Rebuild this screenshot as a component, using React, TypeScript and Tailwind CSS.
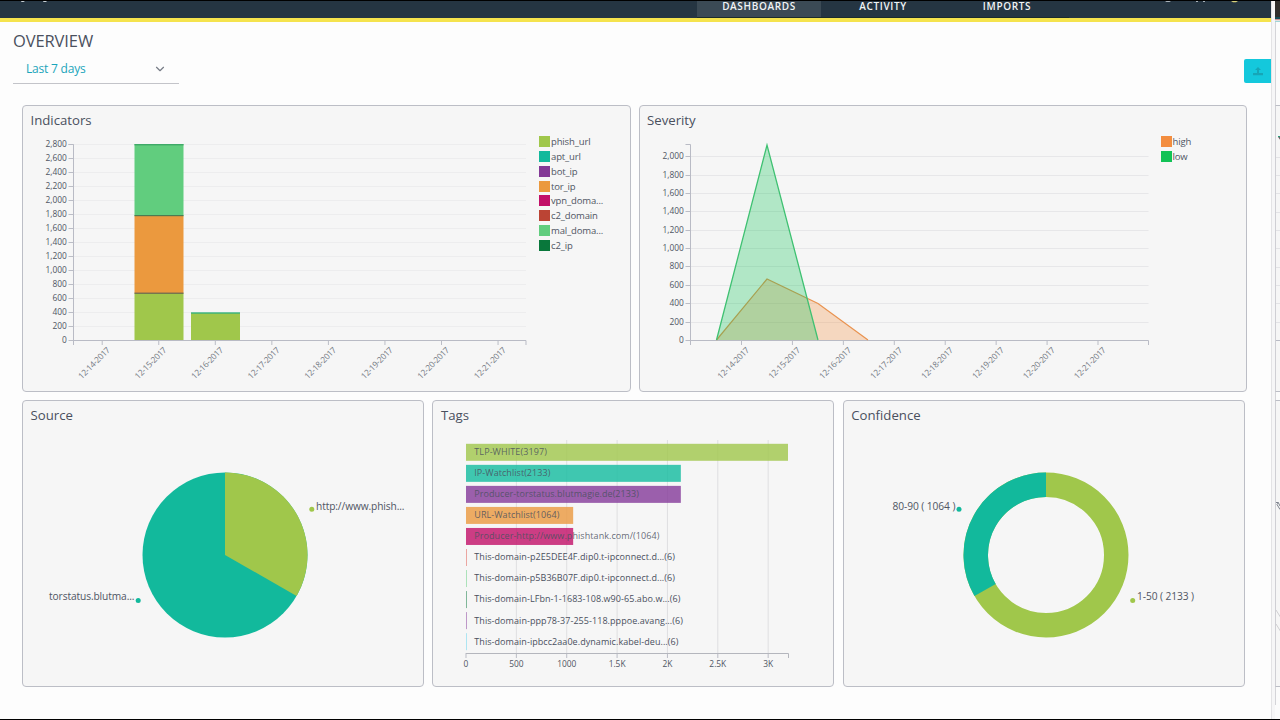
import React from "react";
import { ChevronDown } from "lucide-react";

const days = [
  "12-14-2017",
  "12-15-2017",
  "12-16-2017",
  "12-17-2017",
  "12-18-2017",
  "12-19-2017",
  "12-20-2017",
  "12-21-2017",
];

const indicatorLegend = [
  { label: "phish_url", color: "#a0c74b" },
  { label: "apt_url", color: "#12b99c" },
  { label: "bot_ip", color: "#833996" },
  { label: "tor_ip", color: "#eb993e" },
  { label: "vpn_doma...", color: "#c20f68" },
  { label: "c2_domain", color: "#bb4434" },
  { label: "mal_doma...", color: "#61cd7e" },
  { label: "c2_ip", color: "#09773b" },
];

const severityLegend = [
  { label: "high", color: "#f38d3f" },
  { label: "low", color: "#12c256" },
];

const tags = [
  { label: "TLP-WHITE(3197)", value: 3197, color: "#a0c74b", length: 72.5 },
  { label: "IP-Watchlist(2133)", value: 2133, color: "#12bc9f", length: 76 },
  { label: "Producer-torstatus.blutmagie.de(2133)", value: 2133, color: "#853a9a", length: 164.5 },
  { label: "URL-Watchlist(1064)", value: 1064, color: "#eb993e", length: 85 },
  { label: "Producer-http://www.phishtank.com/(1064)", value: 1064, color: "#c20f68", length: 185 },
  { label: "This-domain-p2E5DEE4F.dip0.t-ipconnect.d...(6)", value: 6, color: "#e0554c", length: 200.5 },
  { label: "This-domain-p5B36B07F.dip0.t-ipconnect.d...(6)", value: 6, color: "#61cd7e", length: 200.5 },
  { label: "This-domain-LFbn-1-1683-108.w90-65.abo.w...(6)", value: 6, color: "#09773b", length: 206 },
  { label: "This-domain-ppp78-37-255-118.pppoe.avang...(6)", value: 6, color: "#853a9a", length: 208.5 },
  { label: "This-domain-ipbcc2aa0e.dynamic.kabel-deu...(6)", value: 6, color: "#63d3ee", length: 204 },
];

const tagTicks = ["0", "500", "1000", "1.5K", "2K", "2.5K", "3K"];

const format = (n: number) => n.toLocaleString("en-US");

const Panel = ({ title, className, children }: { title: string; className: string; children: React.ReactNode }) => {
  return (
    <section className={`flex h-[287px] flex-col overflow-hidden rounded-[4px] border border-[#bcbec6] bg-[#f6f6f6] ${className}`}>
      <h2 className="h-[30px] pl-[7.5px] text-[13.2px] leading-[29px] text-[#4a505e]">{title}</h2>
      <div className="flex flex-1">{children}</div>
    </section>
  );
};

const Legend = ({ items }: { items: { label: string; color: string }[] }) => {
  return (
    <ul className="flex flex-col gap-[3.85px]">
      {items.map((item) => (
        <li key={item.label} className="flex h-[11px] items-center gap-px">
          <span className="h-[11px] w-[11px]" style={{ backgroundColor: item.color }} />
          <span className="text-[9.5px] leading-[11px] tracking-[-0.14px] text-[#4f5563]">{item.label}</span>
        </li>
      ))}
    </ul>
  );
};

type AxesProps = { x0: number; x1: number; first: number; step: number; unit: number; max: number; grid: string };

const Axes = ({ x0, x1, first, step, unit, max, grid }: AxesProps) => {
  const ticks = Array.from({ length: max / 200 + 1 }, (_, i) => i * 200);
  return (
    <g>
      {ticks.map((t) => {
        const y = Math.round(340 - (t / 200) * unit) + 0.5;
        return (
          <g key={t}>
            {t > 0 && <line x1={x0} x2={x1} y1={y} y2={y} stroke={grid} />}
            <line x1={x0 - 5} x2={x0} y1={y} y2={y} stroke="#bbbdc6" />
            <text x={x0 - 6.7} y={y + 2.6} textAnchor="end" fontSize="8.4" fill="#4f5563">
              {format(t)}
            </text>
          </g>
        );
      })}
      {days.map((day, i) => {
        const x = first + i * step;
        return (
          <g key={day}>
            <line x1={x} x2={x} y1="340" y2="345" stroke="#bbbdc6" />
            <text
              transform={`translate(${x + 8.5} 350.5) rotate(-45)`}
              textAnchor="end"
              fontSize="8.4"
              textLength="41"
              fill="#747983"
            >
              {day}
            </text>
          </g>
        );
      })}
      <path d={`M${x0 - 5} 144.5H${x0}V345M${x0} 340.5H${x1}V345`} fill="none" stroke="#b9bbc5" />
    </g>
  );
};

const IndicatorsChart = () => {
  return (
    <svg width="516" height="255" viewBox="23 136 516 255">
      <Axes x0={73.5} x1={526} first={102.2} step={56.55} unit={14} max={2800} grid="#ededee" />
      <rect x="134.5" y="144" width="49" height="72" fill="#61cd7e" />
      <rect x="134.5" y="216" width="49" height="77" fill="#eb993e" />
      <rect x="134.5" y="293" width="49" height="47" fill="#a0c74b" />
      <rect x="134.5" y="144" width="49" height="1.4" fill="#3fa968" />
      <rect x="134.5" y="215" width="49" height="1.2" fill="#4d7b51" />
      <rect x="134.5" y="292.6" width="49" height="1.2" fill="#6b6450" />
      <rect x="191" y="313" width="49" height="27" fill="#a0c74b" />
      <rect x="191" y="312.3" width="49" height="1.4" fill="#36b27c" />
    </svg>
  );
};

const SeverityChart = () => {
  return (
    <svg width="521" height="255" viewBox="640 136 521 255">
      <Axes x0={690.5} x1={1148.5} first={741.5} step={50.93} unit={18.38} max={2000} grid="#e7e7e9" />
      <path d="M716.5 340L767 279L818 303.5L868 340Z" fill="#f38d3f" fillOpacity="0.3" />
      <path d="M716.5 340L767 279L818 303.5L868 340" fill="none" stroke="#e99350" strokeWidth="1.2" />
      <path d="M716.5 340L767 145L818 340Z" fill="#12c256" fillOpacity="0.3" />
      <path d="M716.5 340L767 145L818 340" fill="none" stroke="#3fc172" strokeWidth="1.3" />
    </svg>
  );
};

const SourceChart = () => {
  return (
    <svg width="400" height="255" viewBox="23 431 400 255" fontSize="10.2" fill="#4f5563">
      <circle cx="225" cy="555" r="82.5" fill="#12b99c" />
      <path d="M225 555V472.5A82.5 82.5 0 0 1 296.6 596Z" fill="#a0c74b" />
      <circle cx="311.8" cy="509.3" r="2.5" fill="#a0c74b" />
      <text x="316" y="509.5" textLength="88.5">http://www.phish...</text>
      <circle cx="138.2" cy="600.4" r="2.5" fill="#12b99c" />
      <text x="49" y="600" textLength="85.5">torstatus.blutma...</text>
    </svg>
  );
};

const TagsChart = () => {
  return (
    <svg width="400" height="255" viewBox="433 431 400 255">
      {tagTicks.map((t, i) => {
        const x = 466 + i * 50.36;
        return (
          <g key={t}>
            {i > 0 && <line x1={x} x2={x} y1="440" y2="653" stroke="#dfdfe1" />}
            <line x1={x} x2={x} y1="653" y2="658" stroke="#bbbdc6" />
            <text x={x} y="667" textAnchor="middle" fontSize="8.4" fill="#4f5563">
              {t}
            </text>
          </g>
        );
      })}
      {tags.map((tag, i) => (
        <g key={tag.label}>
          <rect
            x="466"
            y={443.8 + i * 21.04}
            width={Math.max((tag.value / 3197) * 322, 1)}
            height="17"
            fill={tag.color}
            fillOpacity={tag.value > 6 ? 0.8 : 0.5}
          />
          <text x="474.3" y={455.2 + i * 21.04} fontSize="9" textLength={tag.length} fill="#4a505e" fillOpacity={tag.value > 6 ? 0.85 : 1}>
            {tag.label}
          </text>
        </g>
      ))}
      <path d="M466 653.5H788.5V658" fill="none" stroke="#b4b6bd" />
    </svg>
  );
};

const ConfidenceChart = () => {
  return (
    <svg width="400" height="255" viewBox="844 431 400 255" fontSize="10.2" fill="#4f5563">
      <circle cx="1046" cy="555" r="70.25" fill="none" stroke="#a0c74b" strokeWidth="24.5" />
      <path d="M1046 484.75A70.25 70.25 0 0 0 985.1 590" fill="none" stroke="#12b99c" strokeWidth="24.5" />
      <circle cx="959" cy="509.3" r="2.5" fill="#12b99c" />
      <text x="892.4" y="509.5" textLength="63">80-90 ( 1064 )</text>
      <circle cx="1132.7" cy="600.4" r="2.5" fill="#a0c74b" />
      <text x="1137" y="600" textLength="57">1-50 ( 2133 )</text>
    </svg>
  );
};

const Header = () => {
  return (
    <header className="relative flex h-[21px] justify-end border-b-4 border-[#f5e34d] bg-[#253542] pr-[202px] text-[10px] font-semibold tracking-[0.65px] text-[#f1f4f5]">
      <nav className="flex h-[17px] border-b border-[#1b2b2c]">
        <a className="w-[124px] bg-[#3b4a55] text-center leading-[11px]">DASHBOARDS</a>
        <a className="w-[124px] text-center leading-[11px]">ACTIVITY</a>
        <a className="w-[124px] text-center leading-[11px]">IMPORTS</a>
      </nav>
      {/* bottoms of the logo and the user controls, cut by the window edge */}
      <svg className="absolute left-0 top-0" width="1271" height="3" viewBox="0 0 1271 3">
        <path d="M21 0h4l-1.5 1h-2zM43 0h4l-1 1h-2.5z" fill="#c8d0d5" />
        <path d="M1165 0h6l-1.5 1h-3zM1196 0h2v1h-2zM1203 0h2v1h-2z" fill="#aab4bb" />
        <path d="M1231 0h7l-2 1.2h-3z" fill="#d9d27a" />
      </svg>
    </header>
  );
};

// Left edge of the window that sits behind this one
const NextWindow = () => {
  return (
    <aside className="flex h-full w-[9px] bg-[#fbfbfb]">
      <div className="w-1 border-l border-[#e3e3e5] bg-[#f6f6f7]" />
      <div className="h-full w-[5px] overflow-hidden">
        <div className="h-4 bg-[#302e2c]" />
        <div className="h-[2px] bg-[#154c58]" />
        <div className="h-px bg-[#c98f8f]" />
        <div className="h-px bg-[#e6dede]" />
        <div className="h-px bg-[#9fd5d8]" />
        <div className="h-[83px] border-l border-[#d4d4d8]" />
        <div className="h-[287px] border-y border-l border-y-[#bcbec6] border-l-[#cfcfd4] bg-[#f6f6f6]">
          <svg width="5" height="285" viewBox="1275 106 5 285">
            <path d="M1277 137h3v4z" fill="#6d6267" />
            <path d="M1277 136.5h3" stroke="#2c9c7d" />
            <path
              d="M1275 157.5h5M1275 175.5h5M1275 193.5h5M1275 212.5h5M1275 230.5h5M1275 248.5h5M1275 267.5h5M1275 285.5h5M1275 303.5h5M1275 322.5h5"
              stroke="#e3e3e6"
            />
            <path d="M1275 340.5h5" stroke="#b9bbc5" />
          </svg>
        </div>
        <div className="h-2 border-l border-[#d4d4d8]" />
        <div className="h-[287px] border-y border-l border-y-[#bcbec6] border-l-[#cfcfd4] bg-[#f6f6f6]">
          <svg width="5" height="285" viewBox="1275 401 5 285">
            <path d="M1274.5 502.5h3l-1.5 2 3 5M1274.5 503v6M1277.5 503l1.5 3" fill="none" stroke="#7f848e" />
            <path d="M1275 610l5 8M1275 624l5 8" stroke="#cfcfd2" />
          </svg>
        </div>
        <div className="h-[18px] border-l border-[#d4d4d8]" />
      </div>
    </aside>
  );
};

const App = () => {
  return (
    <div className="flex h-[720px] w-[1280px] overflow-hidden border-y border-black bg-[#fdfdfd] font-['Open_Sans',sans-serif]">
      <main className="w-[1271px]">
        <Header />
        <div className="flex h-[83px] justify-between pl-[13px]">
          <div className="pt-[7px]">
            <h1 className="text-[16.5px] leading-6 tracking-[-0.1px] text-[#4a505e]">OVERVIEW</h1>
            <div className="flex h-[31px] w-[166px] items-center justify-between border-b border-[#c3c4c9] pl-[13px] pr-3">
              <span className="pt-[2px] text-[12px] leading-4 tracking-[-0.2px] text-[#1ba5bb]">Last 7 days</span>
              <ChevronDown className="mt-[2px] h-[14px] w-[14px] text-[#777c86]" strokeWidth={2} />
            </div>
          </div>
          <button className="mt-[37px] flex h-6 w-[27px] items-center justify-center rounded-l-[2px] bg-[#14c8dc]">
            <svg width="10" height="9" viewBox="0 0 10 9" fill="#169eae">
              <path d="M5 0l3 3H6v3H4V3H2zM0 6h10v2.2H0z" fillOpacity="0.8" />
            </svg>
          </button>
        </div>
        <div className="flex flex-col gap-2 pl-[22px]">
          <div className="flex gap-2">
            <Panel title="Indicators" className="w-[608.5px]">
              <IndicatorsChart />
              <Legend items={indicatorLegend} />
            </Panel>
            <Panel title="Severity" className="w-[608px]">
              <SeverityChart />
              <Legend items={severityLegend} />
            </Panel>
          </div>
          <div className="flex gap-[8.4px]">
            <Panel title="Source" className="w-[402px]">
              <SourceChart />
            </Panel>
            <Panel title="Tags" className="w-[402px]">
              <TagsChart />
            </Panel>
            <Panel title="Confidence" className="w-[402px]">
              <ConfidenceChart />
            </Panel>
          </div>
        </div>
      </main>
      <NextWindow />
    </div>
  );
};

export default App;
